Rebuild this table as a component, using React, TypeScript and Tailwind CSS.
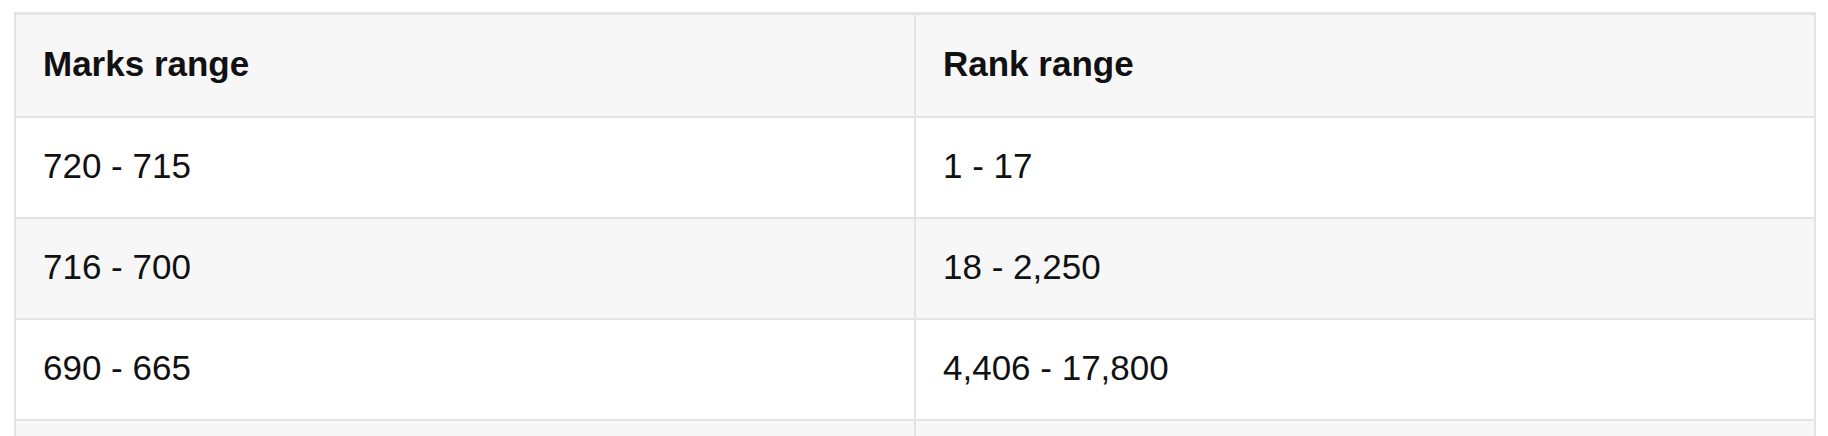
const rows = [
  ["720 - 715", "1 - 17"],
  ["716 - 700", "18 - 2,250"],
  ["690 - 665", "4,406 - 17,800"],
  ["", ""],
];

export default function App() {
  return (
    <div className="bg-white min-h-screen pl-[14px] pr-[12px] pt-[12px] font-['Liberation_Sans',Arial,sans-serif] text-[#111]">
      <table className="w-full border-collapse table-fixed text-[35px] leading-none">
        <thead>
          <tr className="bg-[#f7f7f7]">
            <th className="h-[103px] border-2 border-t-[3px] border-[#e4e4e4] px-[27px] pb-[4px] text-left font-bold">
              Marks range
            </th>
            <th className="h-[103px] border-2 border-t-[3px] border-[#e4e4e4] px-[27px] pb-[4px] text-left font-bold">
              Rank range
            </th>
          </tr>
        </thead>
        <tbody>
          {rows.map((r, i) => (
            <tr key={i} className={i % 2 === 1 ? "bg-[#f7f7f7]" : "bg-white"}>
              <td className="h-[101px] border-2 border-[#e4e4e4] px-[27px] pb-[4px]">{r[0]}</td>
              <td className="h-[101px] border-2 border-[#e4e4e4] px-[27px] pb-[4px]">{r[1]}</td>
            </tr>
          ))}
        </tbody>
      </table>
    </div>
  );
}
